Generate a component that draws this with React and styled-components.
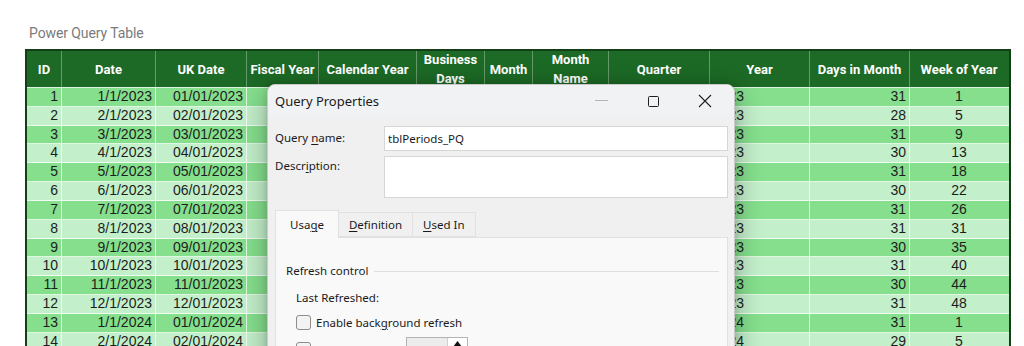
import React from 'react';
import styled, { createGlobalStyle } from 'styled-components';

const GlobalStyle = createGlobalStyle`
  html, body { margin: 0; padding: 0; overflow: hidden; background: #ffffff; }
  body { font-family: "Liberation Sans", Arial, sans-serif; }
  * { box-sizing: border-box; }
`;

const COLS = [
  { key: 'id', label: 'ID', w: 35, align: 'right' },
  { key: 'date', label: 'Date', w: 94, align: 'right' },
  { key: 'uk', label: 'UK Date', w: 91, align: 'right' },
  { key: 'fy', label: 'Fiscal Year', w: 72, align: 'right' },
  { key: 'cy', label: 'Calendar Year', w: 98, align: 'right' },
  { key: 'bd', label: 'Business Days', w: 68, align: 'right' },
  { key: 'm', label: 'Month', w: 48, align: 'right' },
  { key: 'mn', label: 'Month Name', w: 76, align: 'center' },
  { key: 'q', label: 'Quarter', w: 101, align: 'center' },
  { key: 'y', label: 'Year', w: 100, align: 'left' },
  { key: 'dim', label: 'Days in Month', w: 100, align: 'right' },
  { key: 'woy', label: 'Week of Year', w: 98, align: 'center' },
];
const TEMPLATE = COLS.map((c) => `${c.w}px`).join(' ');

const MONTHS = ['January', 'February', 'March', 'April', 'May', 'June', 'July', 'August', 'September', 'October', 'November', 'December'];
const DAYS = [31, 28, 31, 30, 31, 30, 31, 31, 30, 31, 30, 31];
const WEEKS = [1, 5, 9, 13, 18, 22, 26, 31, 35, 40, 44, 48];
const BUS = [22, 20, 23, 20, 23, 22, 21, 23, 21, 22, 22, 21];

const ROWS = Array.from({ length: 14 }, (_, i) => {
  const year = i < 12 ? 2023 : 2024;
  const m = (i % 12) + 1;
  const mm = String(m).padStart(2, '0');
  return {
    id: i + 1,
    date: `${m}/1/${year}`,
    uk: `${mm}/01/${year}`,
    fy: year,
    cy: year,
    bd: BUS[i % 12],
    m,
    mn: MONTHS[m - 1].slice(0, 3),
    q: `Q${Math.ceil(m / 3)}`,
    y: year,
    dim: year === 2024 && m === 2 ? 29 : DAYS[m - 1],
    woy: WEEKS[i % 12],
  };
});

const Page = styled.div`
  position: relative;
  width: 1024px;
  height: 346px;
  overflow: hidden;
  padding: 24px 14px 0 25px;
`;

const Title = styled.div`
  font-family: Roboto, "Liberation Sans", sans-serif;
  font-size: 14px;
  line-height: 18px;
  color: #7b7b7b;
  margin: 0 0 7px 4px;
  letter-spacing: -0.1px;
`;

const Table = styled.div`
  width: 986px;
  border-left: 2px solid #123f15;
  border-right: 2px solid #123f15;
`;

const HeaderRow = styled.div`
  display: grid;
  grid-template-columns: ${TEMPLATE};
  grid-template-rows: 36px;
  background: #1c6a25;
  border-top: 2px solid #123f15;
  border-bottom: 1px solid #dff3e1;
  height: 39px;
`;

const HeadCell = styled.div`
  display: flex;
  align-items: center;
  justify-content: center;
  text-align: center;
  min-height: 0;
  font-family: Roboto, "Liberation Sans", sans-serif;
  font-weight: 700;
  font-size: 13px;
  line-height: 19px;
  color: #ffffff;
  border-right: 1px solid rgba(255, 255, 255, 0.32);
  &:last-child { border-right: none; }
`;

const BodyRow = styled.div`
  display: grid;
  grid-template-columns: ${TEMPLATE};
  height: 18.83px;
  background: ${(p) => (p.$odd ? '#85df8d' : '#c3efca')};
  border-bottom: 1px solid rgba(255, 255, 255, 0.75);
`;

const Cell = styled.div`
  font-size: 14px;
  line-height: 17.8px;
  color: #1d1d1d;
  padding: 0 3px;
  text-align: ${(p) => p.$align};
  white-space: nowrap;
  overflow: hidden;
  border-right: 1px solid rgba(255, 255, 255, 0.75);
  &:last-child { border-right: none; }
`;

/* ---------- Dialog ---------- */

const Dialog = styled.div`
  position: absolute;
  left: 267px;
  top: 84px;
  width: 468px;
  height: 300px;
  background: #f0f0f0;
  border: 1px solid #c9c9c9;
  border-radius: 8px;
  box-shadow: 0 6px 28px rgba(0, 0, 0, 0.32), 0 0 6px rgba(0, 0, 0, 0.12);
  font-family: "Noto Sans", "Open Sans", sans-serif;
  color: #1a1a1a;
  overflow: hidden;
`;

const TitleBar = styled.div`
  display: flex;
  align-items: center;
  height: 32px;
  padding-left: 7px;
  background: #f1f2f4;
`;

const TitleText = styled.div`
  font-size: 13px;
  line-height: 18px;
  color: #1a1a1a;
`;

const Caption = styled.div`
  margin-left: auto;
  display: flex;
  height: 100%;
  margin-right: 3px;
`;

const CapButton = styled.div`
  width: 52px;
  height: 100%;
  display: flex;
  align-items: center;
  justify-content: center;
`;

const MinLine = styled.div`
  width: 13px;
  height: 1px;
  background: #b5b5b5;
  margin-top: -2px;
`;

const MaxBox = styled.div`
  width: 11px;
  height: 11px;
  border: 1px solid #1f1f1f;
  border-radius: 1.5px;
`;

const DialogBody = styled.div`
  padding: 9px 6px 0 7px;
`;

const FormRow = styled.div`
  display: grid;
  grid-template-columns: 109px 1fr;
  margin-top: ${(p) => p.$mt || 0}px;
`;

const Label = styled.div`
  font-size: 11.5px;
  line-height: 16px;
  padding-top: ${(p) => p.$pt || 0}px;
`;

const Field = styled.div`
  height: ${(p) => p.$h}px;
  background: #ffffff;
  border: 1px solid #d6d6d6;
  font-size: 11.5px;
  line-height: 23px;
  padding-left: 3px;
`;

const TabStrip = styled.div`
  display: flex;
  align-items: flex-end;
  margin-top: 12px;
  position: relative;
  z-index: 1;
`;

const Tab = styled.div`
  height: ${(p) => (p.$active ? 28 : 25)}px;
  padding: 0 ${(p) => p.$pad}px;
  background: ${(p) => (p.$active ? '#f9f9f9' : '#f0f0f0')};
  border: 1px solid #e1e1e1;
  border-bottom: ${(p) => (p.$active ? 'none' : '1px solid #e1e1e1')};
  border-left: ${(p) => (p.$first ? '1px solid #e1e1e1' : 'none')};
  font-size: 11.5px;
  line-height: ${(p) => (p.$active ? 28 : 23)}px;
  margin-bottom: ${(p) => (p.$active ? -1 : 0)}px;
`;

const Panel = styled.div`
  width: 453px;
  height: 120px;
  background: #f9f9f9;
  border: 1px solid #e1e1e1;
  padding: 25px 8px 0 10px;
`;

const GroupHead = styled.div`
  display: flex;
  align-items: center;
  font-size: 11.5px;
  line-height: 16px;
`;

const GroupLine = styled.div`
  flex: 1;
  height: 1px;
  background: #dedede;
  margin-left: 6px;
`;

const Indented = styled.div`
  padding-left: 10px;
  font-size: 11.5px;
`;

const Line = styled.div`
  line-height: 16px;
  margin-top: 11px;
`;

const CheckRow = styled.div`
  display: flex;
  align-items: center;
  height: ${(p) => p.$h}px;
  margin-top: ${(p) => p.$mt}px;
  gap: 5px;
`;

const Check = styled.div`
  width: 15px;
  height: 15px;
  border: 1px solid #8c8c8c;
  border-radius: 3px;
  background: #f3f3f3;
  flex: none;
`;

const Spin = styled.div`
  display: flex;
  margin-left: ${(p) => p.$ml}px;
  align-self: flex-start;
  width: 62px;
  height: 24px;
  border: 1px solid #b3b3b3;
  background: #ffffff;
`;

const SpinInput = styled.div`
  flex: 1;
  background: #ececec;
`;

const SpinBtn = styled.div`
  width: 20px;
  display: flex;
  justify-content: center;
  padding-top: 3px;
  border-left: 1px solid #d0d0d0;
`;

const U = styled.span`
  text-decoration: underline;
  text-underline-offset: 2px;
`;

export default function App() {
  return (
    <>
      <GlobalStyle />
      <Page>
        <Title>Power Query Table</Title>
        <Table>
          <HeaderRow>
            {COLS.map((c) => (
              <HeadCell key={c.key}>{c.label}</HeadCell>
            ))}
          </HeaderRow>
          {ROWS.map((r, i) => (
            <BodyRow key={r.id} $odd={i % 2 === 0}>
              {COLS.map((c) => (
                <Cell key={c.key} $align={c.align}>
                  {r[c.key]}
                </Cell>
              ))}
            </BodyRow>
          ))}
        </Table>

        <Dialog>
          <TitleBar>
            <TitleText>Query Properties</TitleText>
            <Caption>
              <CapButton>
                <MinLine />
              </CapButton>
              <CapButton>
                <MaxBox />
              </CapButton>
              <CapButton>
                <svg width="16" height="16" viewBox="0 0 16 16">
                  <path d="M2 2 L14 14 M14 2 L2 14" stroke="#1f1f1f" strokeWidth="1.1" fill="none" />
                </svg>
              </CapButton>
            </Caption>
          </TitleBar>
          <DialogBody>
            <FormRow>
              <Label $pt={4}>
                Query <U>n</U>ame:
              </Label>
              <Field $h={25}>tblPeriods_PQ</Field>
            </FormRow>
            <FormRow $mt={5}>
              <Label $pt={2}>
                Descr<U>i</U>ption:
              </Label>
              <Field $h={42} />
            </FormRow>
            <TabStrip>
              <Tab $active $first $pad={14}>
                Usa<U>g</U>e
              </Tab>
              <Tab $pad={10}>
                <U>D</U>efinition
              </Tab>
              <Tab $pad={10}>
                <U>U</U>sed In
              </Tab>
            </TabStrip>
            <Panel>
              <GroupHead>
                Refresh control
                <GroupLine />
              </GroupHead>
              <Indented>
                <Line>Last Refreshed:</Line>
                <CheckRow $h={18} $mt={7}>
                  <Check />
                  <span>
                    Enable back<U>g</U>round refresh
                  </span>
                </CheckRow>
                <CheckRow $h={24} $mt={6}>
                  <Check />
                  <span>Refresh every</span>
                  <Spin $ml={12}>
                    <SpinInput />
                    <SpinBtn>
                      <svg width="9" height="6" viewBox="0 0 9 6">
                        <path d="M4.5 0 L9 6 L0 6 Z" fill="#111" />
                      </svg>
                    </SpinBtn>
                  </Spin>
                </CheckRow>
              </Indented>
            </Panel>
          </DialogBody>
        </Dialog>
      </Page>
    </>
  );
}
